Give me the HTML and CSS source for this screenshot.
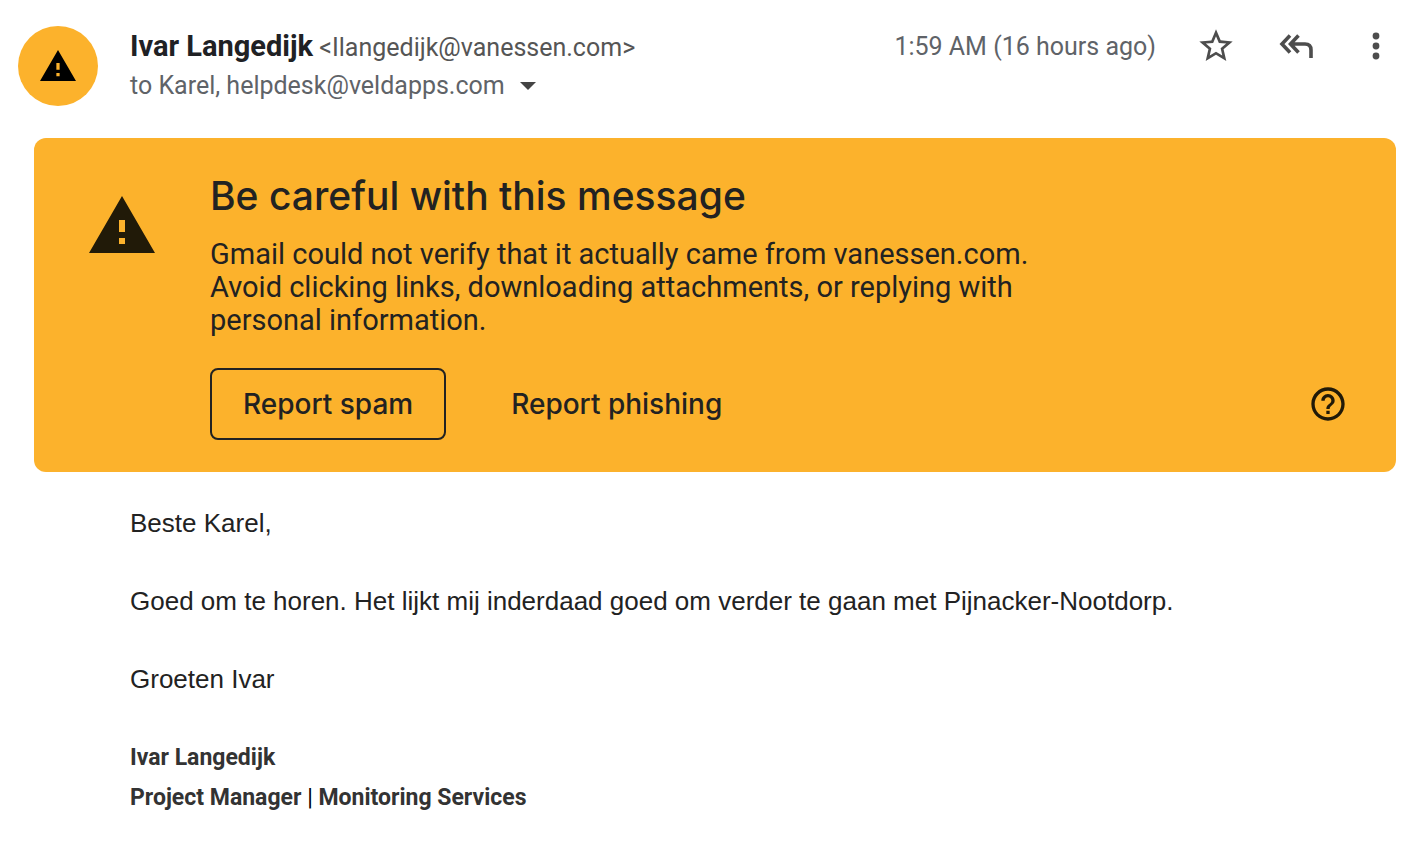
FILE: index.html
```html
<!DOCTYPE html>
<html lang="en">
<head>
<meta charset="utf-8">
<meta name="viewport" content="width=device-width, initial-scale=1">
<title>Message from Ivar Langedijk</title>
<link rel="stylesheet" href="styles.css">
</head>
<body>
<article class="message">
  <header class="message-header">
    <div class="avatar">
      <svg class="avatar-icon" viewBox="0 0 22 19" aria-hidden="true"><path fill-rule="evenodd" d="M11 0 22 19H0ZM10 8v4h2V8ZM10 14v2h2v-2Z"/></svg>
    </div>
    <div class="people">
      <div class="sender"><span class="sender-name">Ivar Langedijk</span> <span class="sender-address">&lt;Ilangedijk@vanessen.com&gt;</span></div>
      <div class="recipients">
        <span>to Karel, helpdesk@veldapps.com</span>
        <button class="icon-button details" type="button" aria-label="Show details"><svg class="caret" viewBox="0 0 16 8"><path d="M0 0h16L8 8Z"/></svg></button>
      </div>
    </div>
    <div class="tools">
      <time class="sent">1:59 AM (16 hours ago)</time>
      <button class="icon-button" type="button" aria-label="Star"><svg class="tool-icon" viewBox="0 0 24 24"><path d="M22 9.24l-7.19-.62L12 2 9.19 8.63 2 9.24l5.46 4.73L5.82 21 12 17.27 18.18 21l-1.63-7.03L22 9.24zM12 15.4l-3.76 2.27 1-4.28-3.32-2.88 4.38-.38L12 6.1l1.71 4.04 4.38.38-3.32 2.88 1 4.28L12 15.4z"/></svg></button>
      <button class="icon-button" type="button" aria-label="Reply to all"><svg class="tool-icon" viewBox="0 0 40 40" fill="none" stroke="currentColor" stroke-width="3.6"><path d="M14 9.6 6 18l8 8.4M22.5 9.6l-8 8.4 8 8.4M14.5 18H29q6 0 6 6v8"/></svg></button>
      <button class="icon-button" type="button" aria-label="More"><svg class="tool-icon" viewBox="0 0 40 40"><circle cx="20" cy="10" r="3.4"/><circle cx="20" cy="20" r="3.4"/><circle cx="20" cy="30" r="3.4"/></svg></button>
    </div>
  </header>

  <section class="warning" aria-labelledby="warning-title">
    <svg class="warning-icon" viewBox="0 0 22 19" aria-hidden="true"><path fill-rule="evenodd" d="M11 0 22 19H0ZM10 8v4h2V8ZM10 14v2h2v-2Z"/></svg>
    <div class="warning-content">
      <h2 class="warning-title" id="warning-title">Be careful with this message</h2>
      <p class="warning-text">Gmail could not verify that it actually came from vanessen.com. Avoid clicking links, downloading attachments, or replying with personal information.</p>
      <div class="warning-actions">
        <button class="action action-outlined" type="button">Report spam</button>
        <button class="action" type="button">Report phishing</button>
        <button class="icon-button help" type="button" aria-label="Help"><svg class="tool-icon" viewBox="0 0 24 24"><path d="M11 18h2v-2h-2v2zm1-16C6.48 2 2 6.48 2 12s4.48 10 10 10 10-4.48 10-10S17.52 2 12 2zm0 18c-4.41 0-8-3.59-8-8s3.59-8 8-8 8 3.59 8 8-3.59 8-8 8zm0-14c-2.21 0-4 1.79-4 4h2c0-1.1.9-2 2-2s2 .9 2 2c0 2-3 1.75-3 5h2c0-2.25 3-2.5 3-5 0-2.21-1.79-4-4-4z"/></svg></button>
      </div>
    </div>
  </section>

  <div class="body">
    <p>Beste Karel,</p>
    <p>Goed om te horen. Het lijkt mij inderdaad goed om verder te gaan met Pijnacker-Nootdorp.</p>
    <p>Groeten Ivar</p>
    <div class="signature">
      <div>Ivar Langedijk</div>
      <div>Project Manager <span class="divider">|</span> Monitoring Services</div>
    </div>
  </div>
</article>
</body>
</html>
```

FILE: styles.css
```css
* {
  box-sizing: border-box;
}

body {
  margin: 0;
  background: #fff;
  color: #222;
  font-family: Roboto, "Liberation Sans", sans-serif;
}

button {
  border: 0;
  padding: 0;
  background: none;
  color: inherit;
  font: inherit;
  cursor: pointer;
}

svg {
  display: block;
  fill: currentColor;
}

svg[fill="none"] {
  fill: none;
}

.message {
  padding: 26px 20px 24px 18px;
}

.message-header {
  display: flex;
  align-items: flex-start;
  gap: 32px;
}

.avatar {
  display: flex;
  align-items: center;
  justify-content: center;
  width: 80px;
  height: 80px;
  border-radius: 50%;
  background: #fcb22c;
  color: #000;
}

.avatar-icon {
  width: 36px;
}

.people {
  flex: 1;
  color: #5f6368;
  font-size: 25px;
  line-height: 40px;
}

.sender {
  height: 40px;
}

.sender-name {
  color: #202124;
  font-size: 29px;
  font-weight: 700;
}

.sender-address {
  color: #555;
}

.recipients {
  display: flex;
  align-items: center;
  gap: 15px;
}

.caret {
  width: 16px;
  color: #444;
}

.tools {
  display: flex;
  align-items: center;
  gap: 40px;
  height: 40px;
  color: #4d4d4d;
}

.sent {
  color: #5f6368;
  font-size: 25px;
}

.icon-button {
  flex: none;
}

.tool-icon {
  width: 40px;
  height: 40px;
}

.warning {
  display: flex;
  gap: 55px;
  margin: 32px 0 32px 16px;
  padding: 32px 48px 32px 55px;
  border-radius: 12px;
  background: #fcb22c;
}

.warning-icon {
  flex: none;
  width: 66px;
  height: 57px;
  margin-top: 26px;
  color: #211a08;
}

.warning-content {
  flex: 1;
}

.warning-title {
  margin: 0 0 16px;
  font-family: "Google Sans", Inter, sans-serif;
  font-size: 39px;
  font-weight: 500;
  line-height: 52px;
}

.warning-text {
  max-width: 832px;
  margin: 0 0 31px;
  font-size: 29px;
  line-height: 33px;
}

.warning-actions {
  display: flex;
  align-items: center;
  gap: 32px;
}

.action {
  height: 72px;
  padding: 0 31px;
  border: 2px solid transparent;
  border-radius: 8px;
  font-family: "Google Sans", Inter, sans-serif;
  font-size: 28px;
  font-weight: 500;
}

.action-outlined {
  border-color: #222;
}

.help {
  margin-left: auto;
  color: #211a08;
}

.body {
  padding-left: 112px;
  font-family: Arial, "Liberation Sans", sans-serif;
  font-size: 26px;
  line-height: 39px;
}

.body p {
  margin: 0 0 39px;
}

.signature {
  color: #333;
  font-family: "Arial Narrow", "Liberation Sans Narrow", Roboto, sans-serif;
  font-size: 23px;
  font-weight: 700;
  line-height: 40px;
}

.divider {
  color: #000;
  font-weight: 400;
}
```
